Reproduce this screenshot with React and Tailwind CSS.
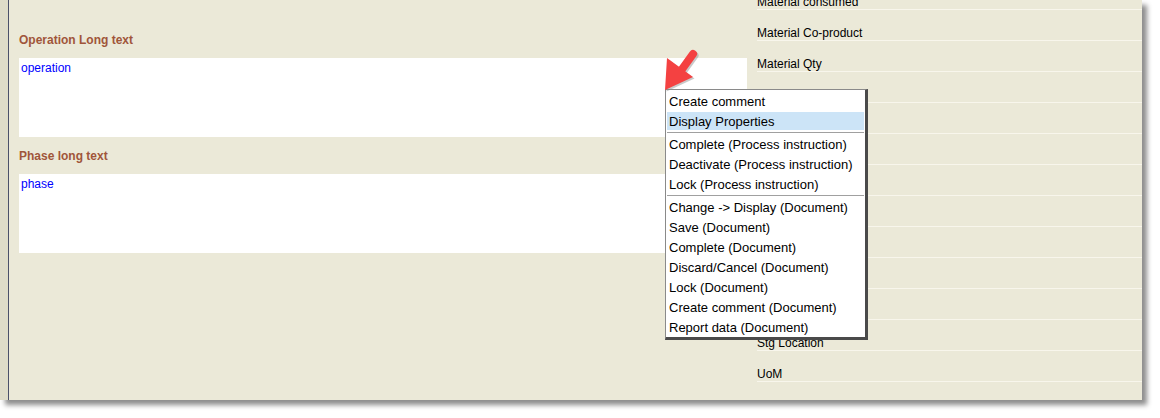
import React from 'react';

const rows = [
  'Material consumed',
  'Material Co-product',
  'Material Qty',
  '',
  '',
  '',
  '',
  '',
  '',
  '',
  '',
  'Stg Location',
  'UoM',
];

const menuGroups = [
  ['Create comment', 'Display Properties'],
  ['Complete (Process instruction)', 'Deactivate (Process instruction)', 'Lock (Process instruction)'],
  [
    'Change -> Display (Document)',
    'Save (Document)',
    'Complete (Document)',
    'Discard/Cancel (Document)',
    'Lock (Document)',
    'Create comment (Document)',
    'Report data (Document)',
  ],
];

function TextArea({ label, value }) {
  return (
    <div className="flex flex-col">
      <div className="text-[12px] leading-[14px] font-bold text-[#a0553a] mb-[11px]">{label}</div>
      <div className="w-[728px] h-[79px] bg-white pt-[3px] pl-[2px] text-[12px] leading-[14px] text-[#0000ff]">
        {value}
      </div>
    </div>
  );
}

function ContextMenu() {
  return (
    <div className="absolute left-[665px] top-[89px] w-[203px] bg-white border-l border-t border-[#8a8a8a] border-r-[3px] border-b-[3px] border-r-[#4a4a4a] border-b-[#4a4a4a] pt-[1px] text-[13px] text-black">
      {menuGroups.map((group, gi) => (
        <div key={gi}>
          {gi > 0 && (
            <div className="h-[3px] flex items-center">
              <div className="ml-[1px] mr-[1px] h-px w-full bg-[#a0a0a0]" />
            </div>
          )}
          {group.map((item) => (
            <div key={item} className="h-[20px] py-[1px] pl-[1px] pr-[1px]">
              <div
                className={
                  'h-[18px] leading-[18px] pt-[1px] pl-[2px] whitespace-nowrap ' +
                  (item === 'Display Properties' ? 'bg-[#cce4f7]' : '')
                }
              >
                {item}
              </div>
            </div>
          ))}
        </div>
      ))}
    </div>
  );
}

function Arrow() {
  return (
    <svg className="absolute left-[655px] top-[42px]" width="50" height="56" viewBox="0 0 50 56">
      <g transform="translate(1.5,1.5)" fill="#8a8a8a" opacity="0.45">
        <line x1="25" y1="30" x2="38" y2="12" stroke="#8a8a8a" strokeWidth="8" strokeLinecap="round" />
        <polygon points="10,48 12,16 38,35" />
      </g>
      <g fill="#f44141">
        <line x1="25" y1="30" x2="38" y2="12" stroke="#f44141" strokeWidth="8" strokeLinecap="round" />
        <polygon points="10,48 12,16 38,35" />
      </g>
    </svg>
  );
}

export default function App() {
  return (
    <div className="w-[1160px] h-[418px] bg-white relative overflow-hidden" style={{ fontFamily: '"Liberation Sans", Arial, sans-serif' }}>
      <div className="flex w-[1142px] h-[400px] bg-[#ebe9d8] shadow-[5px_5px_5px_rgba(0,0,0,0.45)] overflow-hidden">
        {/* left strip */}
        <div className="w-[8px] bg-[#dedcc8] border-r border-[#4a5068] box-content shrink-0" />

        {/* long texts */}
        <div className="w-[748px] shrink-0 pl-[10px] pt-[33px] flex flex-col gap-[12px]">
          <TextArea label="Operation Long text" value="operation" />
          <TextArea label="Phase long text" value="phase" />
        </div>

        {/* field list */}
        <div className="flex-1 -mt-[21px]">
          {rows.map((r, i) => (
            <div key={i} className="h-[31px] border-b border-[#f8f6ec] flex items-end">
              <span className="text-[12px] leading-[14px] text-black">{r}</span>
            </div>
          ))}
        </div>
      </div>

      <ContextMenu />
      <Arrow />
    </div>
  );
}
